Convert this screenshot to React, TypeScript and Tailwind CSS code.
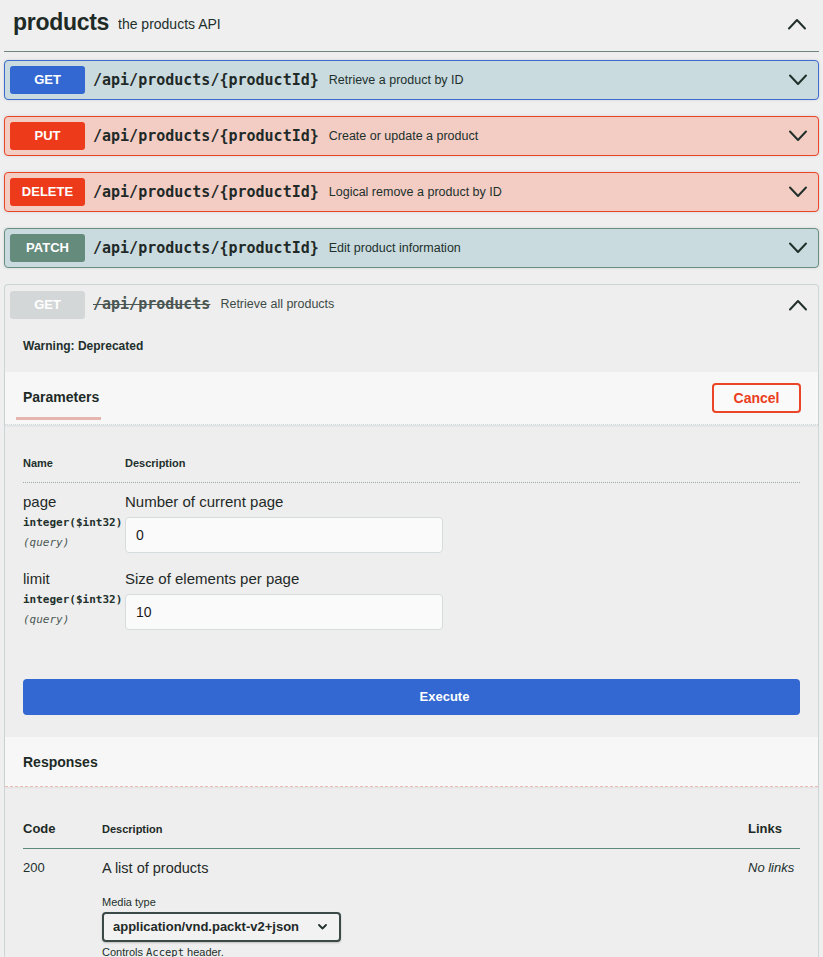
import { ReactNode } from 'react'

type Op = {
  method: string
  path: string
  summary: string
  row: string
  badge: string
}

const OPS: Op[] = [
  { method: 'GET', path: '/api/products/{productId}', summary: 'Retrieve a product by ID', row: 'bg-[#c9dbdf] border-[#3a6cd0]', badge: 'bg-[#3367d1]' },
  { method: 'PUT', path: '/api/products/{productId}', summary: 'Create or update a product', row: 'bg-[#f3cdc4] border-[#ea4526]', badge: 'bg-[#ed3a1a]' },
  { method: 'DELETE', path: '/api/products/{productId}', summary: 'Logical remove a product by ID', row: 'bg-[#f3cdc4] border-[#ea4526]', badge: 'bg-[#ed3a1a]' },
  { method: 'PATCH', path: '/api/products/{productId}', summary: 'Edit product information', row: 'bg-[#c9dbdf] border-[#6b8f82]', badge: 'bg-[#658b7c]' },
]

const PARAMS = [
  { name: 'page', desc: 'Number of current page', value: '0' },
  { name: 'limit', desc: 'Size of elements per page', value: '10' },
]

const sans = "font-['Liberation_Sans',Arial,sans-serif]"
const mono = "font-['DejaVu_Sans_Mono',monospace]"

function Chevron({ up = false }: { up?: boolean }) {
  return (
    <svg width="20" height="12" viewBox="0 0 20 12" fill="none" stroke="#22302c" strokeWidth="2" strokeLinecap="round" strokeLinejoin="round">
      {up ? <polyline points="2,10.5 10,2 18,10.5" /> : <polyline points="2,1.5 10,10 18,1.5" />}
    </svg>
  )
}

function Badge({ children, className }: { children: ReactNode; className: string }) {
  return (
    <span className={`flex h-[28px] w-[75px] shrink-0 items-center justify-center rounded-[3px] text-[13px] font-bold text-white ${className}`}>
      {children}
    </span>
  )
}

export default function App() {
  return (
    <div className={`min-h-[957px] bg-[#efefef] px-1 text-[#22302c] ${sans}`}>
      {/* Tag header */}
      <div className="flex h-[52px] items-center border-b border-[#71857f] pb-[6px] pl-[9px] pr-[12px]">
        <h3 className="text-[23px] font-bold tracking-[-0.3px] text-[#1d2a26]">products</h3>
        <span className="ml-[9px] pt-[3px] text-[14px] text-[#22302c]">the products API</span>
        <div className="ml-auto pt-[3px]">
          <Chevron up />
        </div>
      </div>

      <div className="mt-2 flex flex-col">
        {OPS.map((op) => (
          <div key={op.method} className={`mb-4 flex h-10 items-center rounded-[4px] border pl-[5px] pr-[10px] shadow-[0_0_3px_rgba(0,0,0,0.12)] ${op.row}`}>
            <Badge className={op.badge}>{op.method}</Badge>
            <span className={`ml-[8px] text-[15px] font-bold text-[#1f2a28] ${mono}`}>{op.path}</span>
            <span className="ml-[10px] text-[12.5px] text-[#22302c]">{op.summary}</span>
            <div className="ml-auto">
              <Chevron />
            </div>
          </div>
        ))}

        {/* Deprecated, expanded operation */}
        <div className="flex flex-col rounded-t-[4px] border border-b-0 border-[#cdd5d7] bg-[#eeeeee]">
          <div className="flex h-[39px] items-center pl-[5px] pr-[10px]">
            <Badge className="bg-[#d4d7d8] text-[#f4f4f4]">GET</Badge>
            <span className={`ml-[8px] text-[15px] font-bold text-[#4b5753] line-through ${mono}`}>/api/products</span>
            <span className="ml-[10px] text-[12.5px] text-[#3d4b47]">Retrieve all products</span>
            <div className="ml-auto">
              <Chevron up />
            </div>
          </div>

          <div className="flex h-[48px] items-center px-[18px] pb-[5px] text-[12px] font-bold text-[#22302c]">
            Warning: Deprecated
          </div>

          {/* Parameters header */}
          <div className="flex h-[53px] items-stretch border-b border-dotted border-[#c9d7da] bg-[#f7f7f7] pr-[17px] shadow-[0_1px_2px_rgba(0,0,0,0.08)]">
            <div className="mb-[4px] ml-[11px] flex w-[85px] items-center border-b-[3px] border-[#e6b6ae] pl-[7px] pt-[6px] text-[14px] font-bold whitespace-nowrap text-[#1d2a26]">
              Parameters
            </div>
            <div className="ml-auto flex items-center">
              <button className="h-[30px] w-[89px] rounded-[4px] border-2 border-[#ea4526] bg-[#fafafa] text-[14px] font-bold text-[#ea3d1e]">
                Cancel
              </button>
            </div>
          </div>

          {/* Parameters table */}
          <div className="px-[18px] pt-[30px]">
            <div className="flex h-[16px] items-center text-[11px] font-bold text-[#22302c]">
              <span className="w-[102px]">Name</span>
              <span>Description</span>
            </div>
            <div className="mt-[11px] border-b border-dotted border-[#9aa8ab]" />

            <div className="mt-[10px] flex flex-col gap-[17px]">
              {PARAMS.map((p) => (
                <div key={p.name} className="flex">
                  <div className="w-[102px] shrink-0">
                    <div className="text-[15px] leading-[18px] text-[#1f2a28]">{p.name}</div>
                    <div className={`mt-[4px] text-[11px] font-bold leading-[16px] text-[#22302c] ${mono}`}>integer($int32)</div>
                    <div className={`mt-[4px] text-[11px] italic leading-[16px] text-[#4a5853] ${mono}`}>(query)</div>
                  </div>
                  <div className="flex flex-col">
                    <div className="text-[15px] leading-[18px] text-[#1f2a28]">{p.desc}</div>
                    <div className="mt-[6px] flex h-[36px] w-[318px] items-center rounded-[4px] border border-[#d6dcde] bg-[#fafafa] px-[10px] text-[14px] text-[#1a1a1a]">
                      {p.value}
                    </div>
                  </div>
                </div>
              ))}
            </div>

            <button className="mt-[49px] h-[36px] w-full rounded-[4px] bg-[#3367d1] pl-[66px] text-[13px] font-bold text-white">
              Execute
            </button>
          </div>

          {/* Responses header */}
          <div className="mt-[22px] flex h-[50px] items-center border-b border-dashed border-[#ecbcb4] bg-[#f7f7f7] px-[18px] pt-[2px] text-[14px] font-bold text-[#1d2a26] shadow-[0_1px_2px_rgba(0,0,0,0.06)]">
            Responses
          </div>

          {/* Responses table */}
          <div className="px-[18px] pt-[34px]">
            <div className="flex items-center border-b border-[#5e8a7a] pb-[11px] text-[#1d2a26]">
              <span className="w-[79px] text-[13px] font-bold leading-[16px]">Code</span>
              <span className="text-[11px] font-bold leading-[16px]">Description</span>
              <span className="ml-auto w-[52px] text-[13px] font-bold leading-[16px]">Links</span>
            </div>
            <div className="mt-[11px] flex">
              <span className="w-[79px] text-[13px] leading-[16px] text-[#22302c]">200</span>
              <div className="flex flex-col">
                <span className="text-[14.5px] leading-[16px] text-[#1f2a28]">A list of products</span>
                <span className="mt-[19px] text-[11px] leading-[14px] text-[#22302c]">Media type</span>
                <div className="mt-[3px] flex h-[30px] w-[239px] items-center rounded-[4px] border-2 border-[#3b4a47] bg-[#f2f2f2] pl-[9px] pr-[12px] shadow-[0_1px_2px_rgba(0,0,0,0.2)]">
                  <span className="text-[13px] font-bold text-[#1f2a28]">application/vnd.packt-v2+json</span>
                  <svg className="ml-auto" width="9" height="6" viewBox="0 0 9 6" fill="none" stroke="#22302c" strokeWidth="1.8" strokeLinecap="round" strokeLinejoin="round">
                    <polyline points="1,1 4.5,4.5 8,1" />
                  </svg>
                </div>
                <span className="mt-[3px] text-[11px] leading-[14px] text-[#22302c]">
                  Controls <span className={`text-[10.5px] ${mono}`}>Accept</span> header.
                </span>
              </div>
              <span className="ml-auto w-[52px] text-[13px] italic leading-[16px] text-[#22302c]">No links</span>
            </div>
          </div>
        </div>
      </div>
    </div>
  )
}
